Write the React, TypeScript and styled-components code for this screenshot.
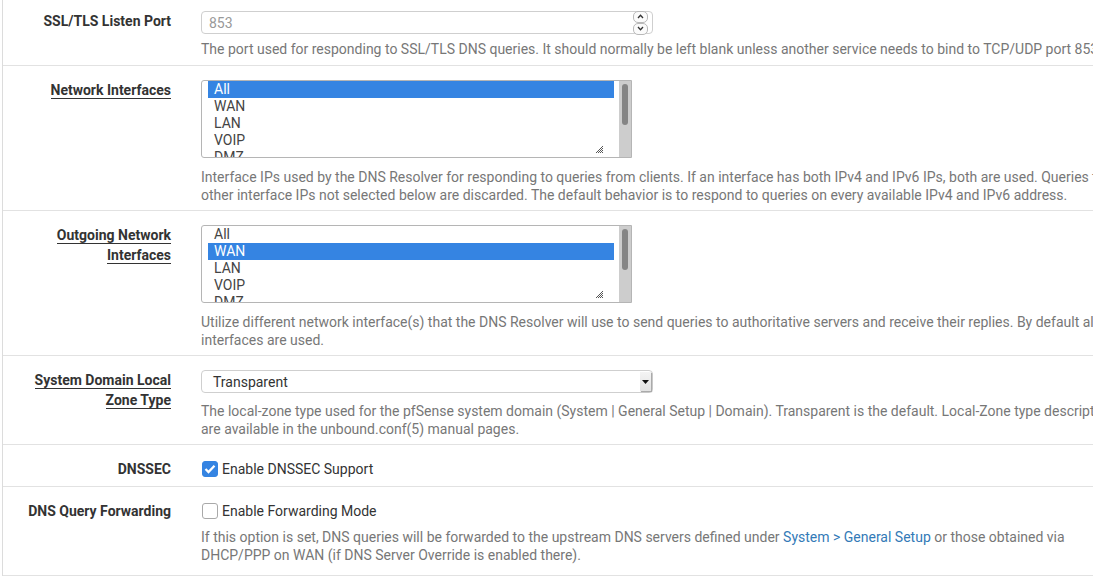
import React from 'react'
import styled, { createGlobalStyle } from 'styled-components'

const GlobalStyle = createGlobalStyle`
  html, body {
    margin: 0;
    padding: 0;
    overflow: hidden;
    background: #fff;
  }
  body {
    font-family: Roboto, "Liberation Sans", sans-serif;
    font-size: 14px;
    line-height: 20px;
    color: #333;
  }
`

const Panel = styled.div`
  margin-top: -3px;
  margin-left: 2px;
  width: 1300px;
  border-left: 1px solid #dcdcdc;
`

const FormGroup = styled.div<{ $pb?: number }>`
  display: grid;
  grid-template-columns: 183px 1fr;
  padding: 14px 0 ${(p) => p.$pb ?? 6}px;
  border-bottom: 1px solid #e2e2e2;
`

const Label = styled.div`
  text-align: right;
  padding-right: 15px;
  font-weight: 700;
  color: #333;
  line-height: 20px;
`

const Underlined = styled.span`
  border-bottom: 1px solid #333;
`

const Field = styled.div`
  padding-left: 15px;
`

const Help = styled.div<{ $gap?: number }>`
  margin-top: ${(p) => p.$gap ?? 6}px;
  color: #777;
  white-space: nowrap;
  line-height: 18px;
`

const Link = styled.a`
  color: #337ab7;
  text-decoration: none;
`

const InputBox = styled.div<{ $w: number }>`
  display: flex;
  align-items: center;
  width: ${(p) => p.$w}px;
  height: 23px;
  box-sizing: border-box;
  border: 1px solid #cfcfcf;
  border-radius: 4px;
  background: #fff;
`

const TextInput = styled.input`
  flex: 1;
  border: 0;
  outline: none;
  background: transparent;
  padding: 0 7px;
  font: inherit;
  color: #555;
  &::placeholder {
    color: #999;
  }
`

const Spin = styled.div`
  display: flex;
  flex-direction: column;
  margin-right: 4px;
`

const SpinButton = styled.div`
  width: 13px;
  height: 10px;
  border: 1px solid #b9b9b9;
  border-radius: 5px;
  background: #fbfbfb;
  display: flex;
  align-items: center;
  justify-content: center;
`

const SelectValue = styled.div`
  flex: 1;
  padding-left: 11px;
  color: #333;
`

const SelectArrow = styled.div`
  width: 11px;
  height: 19px;
  margin-right: 1px;
  background: linear-gradient(#f4f4f4, #e2e2e2);
  box-shadow: 1px 1px 1px #aaa;
  display: flex;
  align-items: center;
  justify-content: center;
`

const ListBox = styled.div`
  display: flex;
  width: 431px;
  height: 78px;
  box-sizing: border-box;
  border: 1px solid #b5b5b5;
  border-radius: 3px 0 0 3px;
  background: #fff;
  overflow: hidden;
`

const Options = styled.div`
  position: relative;
  flex: 1;
  padding: 0 5px 0 6px;
  overflow: hidden;
`

const Option = styled.div<{ $selected?: boolean }>`
  height: 17px;
  line-height: 17px;
  padding-left: 6px;
  color: ${(p) => (p.$selected ? '#fff' : '#444')};
  background: ${(p) => (p.$selected ? '#3584e2' : 'transparent')};
`

const Grip = styled.svg`
  position: absolute;
  right: 16px;
  bottom: 4px;
`

const Track = styled.div`
  width: 12px;
  background: #cdcdcd;
  padding-top: 3px;
  box-sizing: border-box;
`

const Thumb = styled.div`
  width: 6px;
  height: 41px;
  margin: 0 auto;
  border-radius: 3px;
  background: #858585;
`

const CheckRow = styled.label`
  display: flex;
  align-items: center;
  gap: 4px;
  color: #333;
  line-height: 20px;
`

const Box = styled.span<{ $checked?: boolean }>`
  width: 16px;
  height: 16px;
  margin-left: 1px;
  box-sizing: border-box;
  border-radius: 3px;
  border: 1px solid ${(p) => (p.$checked ? '#3584e2' : '#a9a9a9')};
  background: ${(p) => (p.$checked ? '#3584e2' : '#fff')};
  display: flex;
  align-items: center;
  justify-content: center;
`

const Chevron = ({ up }: { up?: boolean }) => (
  <svg width="7" height="5" viewBox="0 0 7 5">
    <path
      d={up ? 'M1 4 L3.5 1.2 L6 4' : 'M1 1 L3.5 3.8 L6 1'}
      fill="none"
      stroke="#333"
      strokeWidth="1.3"
    />
  </svg>
)

const MultiSelect = ({ items, selected }: { items: string[]; selected: string }) => (
  <ListBox>
    <Options>
      {items.map((it) => (
        <Option key={it} $selected={it === selected}>
          {it}
        </Option>
      ))}
      <Grip width="7" height="7" viewBox="0 0 7 7">
        <path d="M7 0 L0 7 M7 2 L2 7 M7 4 L4 7 M7 6 L6 7" stroke="#444" strokeWidth="0.9" />
      </Grip>
    </Options>
    <Track>
      <Thumb />
    </Track>
  </ListBox>
)

const Checkbox = ({ checked, children }: { checked?: boolean; children: React.ReactNode }) => (
  <CheckRow>
    <Box $checked={checked}>
      {checked && (
        <svg width="12" height="10" viewBox="0 0 12 10">
          <path d="M1.5 5 L4.5 8 L10.5 1.8" fill="none" stroke="#fff" strokeWidth="2.3" />
        </svg>
      )}
    </Box>
    {children}
  </CheckRow>
)

const ifaces = ['All', 'WAN', 'LAN', 'VOIP', 'DMZ']

export default function App() {
  return (
    <>
      <GlobalStyle />
      <Panel>
        <FormGroup $pb={7}>
          <Label>SSL/TLS Listen Port</Label>
          <Field>
            <InputBox $w={452}>
              <TextInput placeholder="853" />
              <Spin>
                <SpinButton>
                  <Chevron up />
                </SpinButton>
                <SpinButton>
                  <Chevron />
                </SpinButton>
              </Spin>
            </InputBox>
            <Help>
              The port used for responding to SSL/TLS DNS queries. It should normally be left blank unless another
              service needs to bind to TCP/UDP port 853.
            </Help>
          </Field>
        </FormGroup>

        <FormGroup>
          <Label>
            <Underlined>Network Interfaces</Underlined>
          </Label>
          <Field>
            <MultiSelect items={ifaces} selected="All" />
            <Help $gap={10}>
              Interface IPs used by the DNS Resolver for responding to queries from clients. If an interface has both
              IPv4 and IPv6 IPs, both are used. Queries to
              <br />
              other interface IPs not selected below are discarded. The default behavior is to respond to queries on
              every available IPv4 and IPv6 address.
            </Help>
          </Field>
        </FormGroup>

        <FormGroup>
          <Label>
            <Underlined>Outgoing Network</Underlined>
            <br />
            <Underlined>Interfaces</Underlined>
          </Label>
          <Field>
            <MultiSelect items={ifaces} selected="WAN" />
            <Help $gap={10}>
              Utilize different network interface(s) that the DNS Resolver will use to send queries to authoritative
              servers and receive their replies. By default all
              <br />
              interfaces are used.
            </Help>
          </Field>
        </FormGroup>

        <FormGroup>
          <Label>
            <Underlined>System Domain Local</Underlined>
            <br />
            <Underlined>Zone Type</Underlined>
          </Label>
          <Field>
            <InputBox $w={452}>
              <SelectValue>Transparent</SelectValue>
              <SelectArrow>
                <svg width="7" height="4" viewBox="0 0 7 4">
                  <path d="M0 0 H7 L3.5 4 Z" fill="#111" />
                </svg>
              </SelectArrow>
            </InputBox>
            <Help $gap={9}>
              The local-zone type used for the pfSense system domain (System | General Setup | Domain). Transparent is
              the default. Local-Zone type descriptions
              <br />
              are available in the unbound.conf(5) manual pages.
            </Help>
          </Field>
        </FormGroup>

        <FormGroup $pb={7}>
          <Label>DNSSEC</Label>
          <Field>
            <Checkbox checked>Enable DNSSEC Support</Checkbox>
          </Field>
        </FormGroup>

        <FormGroup $pb={11}>
          <Label>DNS Query Forwarding</Label>
          <Field>
            <Checkbox>Enable Forwarding Mode</Checkbox>
            <Help $gap={7}>
              If this option is set, DNS queries will be forwarded to the upstream DNS servers defined under{' '}
              <Link href="#">System &gt; General Setup</Link> or those obtained via
              <br />
              DHCP/PPP on WAN (if DNS Server Override is enabled there).
            </Help>
          </Field>
        </FormGroup>
      </Panel>
    </>
  )
}
